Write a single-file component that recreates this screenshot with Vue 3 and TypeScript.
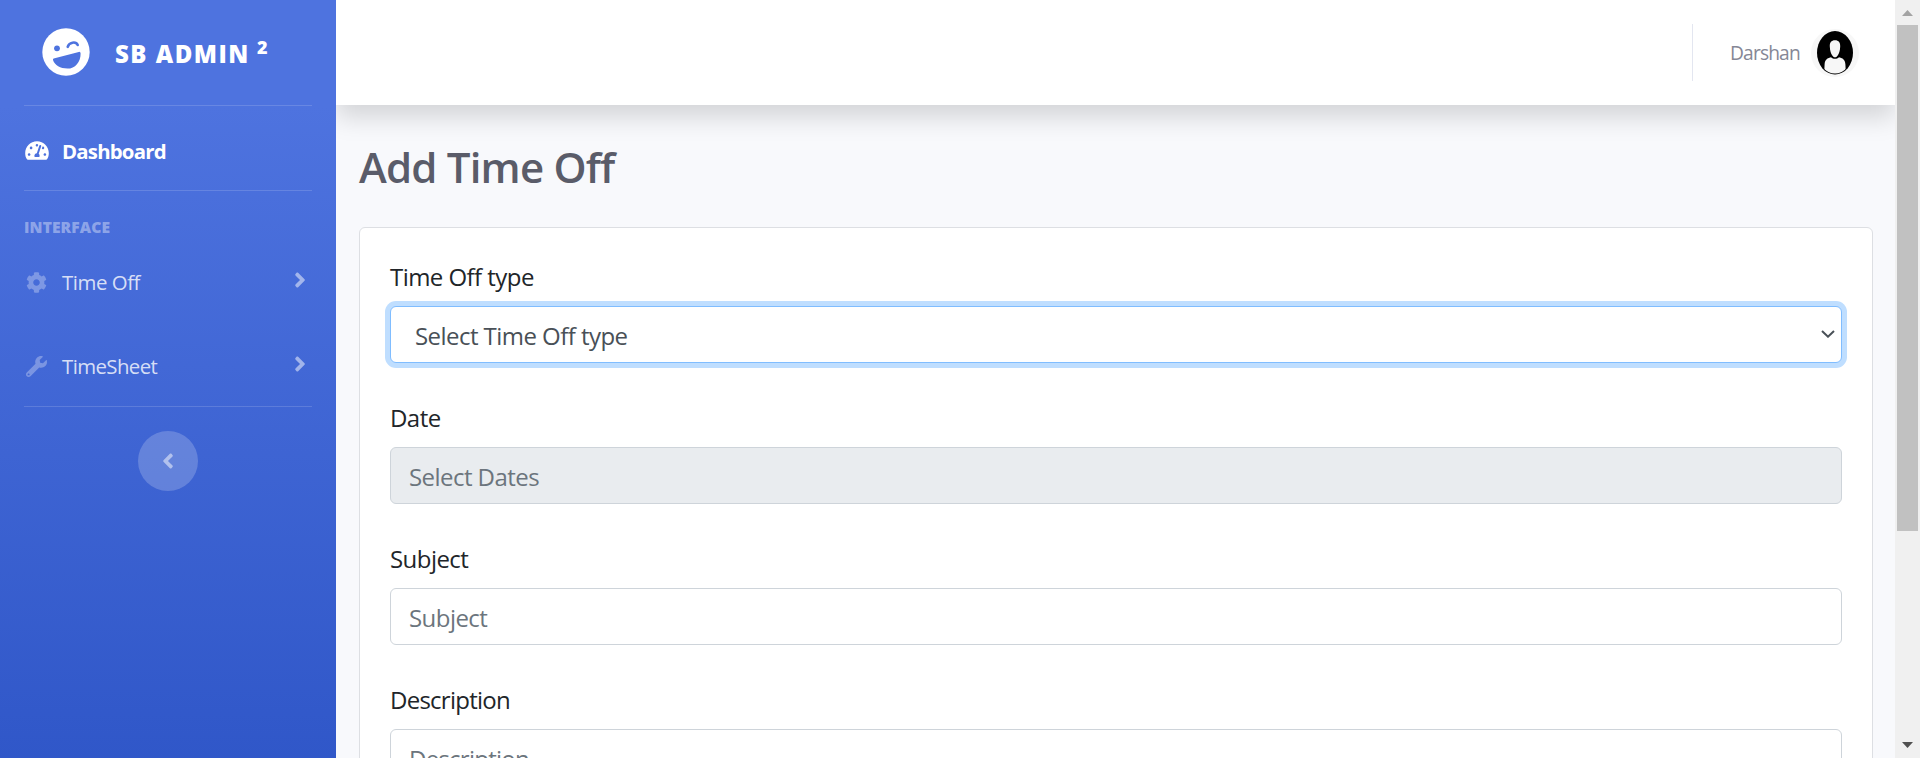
<script setup lang="ts">
import { ref } from 'vue'

interface NavEntry {
  label: string
  kind: string
  icon: string
}

const tachometer =
  'M288 32C128.94 32 0 160.94 0 320c0 52.8 14.25 102.26 39.06 144.8 5.61 9.62 16.3 15.2 27.44 15.2h443c11.14 0 21.83-5.58 27.44-15.2C561.75 422.26 576 372.8 576 320c0-159.06-128.94-288-288-288zm0 64c14.71 0 26.58 10.13 30.32 23.65-1.11 2.26-2.64 4.23-3.45 6.67l-9.22 27.67c-5.13 3.49-10.97 6.01-17.64 6.01-17.67 0-32-14.33-32-32S270.33 96 288 96zM96 384c-17.67 0-32-14.33-32-32s14.33-32 32-32 32 14.33 32 32-14.33 32-32 32zm48-160c-17.67 0-32-14.33-32-32s14.33-32 32-32 32 14.33 32 32-14.33 32-32 32zm246.77-72.41l-61.33 184C343.13 347.33 352 364.54 352 384c0 11.72-3.38 22.55-8.88 32H232.88c-5.5-9.45-8.88-20.28-8.88-32 0-33.94 26.5-61.43 59.9-63.59l61.34-184.01c4.17-12.56 17.73-19.45 30.36-15.17 12.57 4.19 19.35 17.79 15.17 30.36zm14.66 57.2l15.52-46.55c3.47-1.29 7.13-2.23 11.05-2.23 17.67 0 32 14.33 32 32s-14.33 32-32 32c-11.38-.01-20.89-6.28-26.57-15.22zM480 384c-17.67 0-32-14.33-32-32s14.33-32 32-32 32 14.33 32 32-14.33 32-32 32z'
const angle =
  'M224.3 273l-136 136c-9.4 9.4-24.6 9.4-33.9 0l-22.6-22.6c-9.4-9.4-9.4-24.6 0-33.9l96.4-96.4-96.4-96.4c-9.4-9.4-9.4-24.6 0-33.9L54.3 103c9.4-9.4 24.6-9.4 33.9 0l136 136c9.5 9.4 9.5 24.6.1 34z'

const entries: NavEntry[] = [
  {
    label: 'Time Off',
    kind: 'time-off',
    icon: 'M487.4 315.7l-42.6-24.6c4.3-23.2 4.3-47 0-70.2l42.6-24.6c4.9-2.8 7.1-8.6 5.5-14-11.1-35.6-30-67.8-54.7-94.6-3.8-4.1-10-5.1-14.8-2.3L380.8 110c-17.9-15.4-38.5-27.3-60.8-35.1V25.8c0-5.6-3.9-10.5-9.4-11.7-36.7-8.2-74.3-7.8-109.2 0-5.5 1.2-9.4 6.1-9.4 11.7V75c-22.2 7.9-42.8 19.8-60.8 35.1L88.7 85.5c-4.9-2.8-11-1.9-14.8 2.3-24.7 26.7-43.6 58.9-54.7 94.6-1.7 5.4.6 11.2 5.5 14L67.3 221c-4.3 23.2-4.3 47 0 70.2l-42.6 24.6c-4.9 2.8-7.1 8.6-5.5 14 11.1 35.6 30 67.8 54.7 94.6 3.8 4.1 10 5.1 14.8 2.3l42.6-24.6c17.9 15.4 38.5 27.3 60.8 35.1v49.2c0 5.6 3.9 10.5 9.4 11.7 36.7 8.2 74.3 7.8 109.2 0 5.5-1.2 9.4-6.1 9.4-11.7v-49.2c22.2-7.9 42.8-19.8 60.8-35.1l42.6 24.6c4.9 2.8 11 1.9 14.8-2.3 24.7-26.7 43.6-58.9 54.7-94.6 1.5-5.5-.7-11.3-5.6-14.1zM256 336c-44.1 0-80-35.9-80-80s35.9-80 80-80 80 35.9 80 80-35.9 80-80 80z',
  },
  {
    label: 'TimeSheet',
    kind: 'timesheet',
    icon: 'M507.73 109.1c-2.24-9.03-13.54-12.09-20.12-5.51l-74.36 74.36-67.88-11.31-11.31-67.88 74.36-74.36c6.62-6.62 3.43-17.9-5.66-20.16-47.38-11.74-99.55.91-136.58 37.93-39.64 39.64-50.55 97.1-34.05 147.2L18.74 402.76c-24.99 24.99-24.99 65.51 0 90.5 24.99 24.99 65.51 24.99 90.5 0l213.21-213.21c50.12 16.71 107.47 5.68 147.37-34.22 37.07-37.07 49.7-89.32 37.91-136.73zM64 472c-13.25 0-24-10.75-24-24 0-13.26 10.75-24 24-24s24 10.74 24 24c0 13.25-10.75 24-24 24z',
  },
]

const subject = ref('')
const description = ref('')
</script>

<template>
  <div class="page">
    <aside class="sidebar">
      <a class="brand">
        <svg class="brand-icon" viewBox="0 0 48 48">
          <circle cx="24" cy="24" r="23.7" fill="#fff" />
          <circle cx="15" cy="20.3" r="2.9" fill="#4e73df" />
          <path d="M25.7 18.8c1.2-4.6 8.2-5.8 10-1.8" fill="none" stroke="#4e73df" stroke-width="2.6" stroke-linecap="round" />
          <path d="M11.7 30.6 36.8 23.9q1.8-.3 1.8 1.5C38.8 34 33 40.6 25.5 40.6 18.2 40.6 12.8 37.5 11 32.1Q10.8 30.9 11.7 30.6z" fill="#4e73df" />
        </svg>
        <span class="brand-name">SB ADMIN</span><span class="brand-sup">2</span>
      </a>
      <hr class="rule" />
      <a class="nav-link dashboard">
        <span class="nav-icon"><svg class="tach" viewBox="0 0 576 512"><path :d="tachometer" /></svg></span>
        <span class="nav-label">Dashboard</span>
      </a>
      <hr class="rule" />
      <div class="heading"><span>INTERFACE</span></div>
      <a v-for="e in entries" :key="e.kind" class="nav-link entry" :class="e.kind">
        <span class="nav-icon"><svg class="glyph" viewBox="0 0 512 512"><path :d="e.icon" /></svg></span>
        <span class="nav-label">{{ e.label }}</span>
        <svg class="angle" viewBox="0 0 256 512"><path :d="angle" /></svg>
      </a>
      <hr class="rule last" />
      <button class="toggle" aria-label="Toggle sidebar">
        <svg class="angle flip" viewBox="0 0 256 512"><path :d="angle" /></svg>
      </button>
    </aside>

    <div class="content">
      <header class="topbar">
        <span class="divider"></span>
        <span class="user">Darshan</span>
        <svg class="avatar" viewBox="0 0 48 48">
          <defs>
            <clipPath id="avatar-clip"><ellipse cx="24" cy="23.8" rx="17.3" ry="20.8" /></clipPath>
          </defs>
          <circle cx="24" cy="24" r="24" fill="#f7f7f7" />
          <ellipse cx="24" cy="23.8" rx="18" ry="21.7" fill="#000" />
          <g clip-path="url(#avatar-clip)" fill="#f7f7f7">
            <path d="M24 11.3c3.7 0 5.3 2.2 5.2 6.1-.1 4.6-1.3 7.2-2.5 9-.9 1.3-1.700 1.900-2.700 1.900s-1.800-.6-2.700-1.900c-1.200-1.800-2.400-4.400-2.500-9-.1-3.900 1.500-6.100 5.200-6.100z" />
            <path d="M20 28.200c1.200 1 2.600 1.500 4 1.500s2.800-.5 4-1.500c4.500 1 6 3 6.400 7l.6 12H13l.6-12c.4-4 1.900-6 6.400-7z" />
          </g>
        </svg>
      </header>

      <main class="main">
        <h1 class="title">Add Time Off</h1>
        <form class="card">
          <div class="group type">
            <label>Time Off type</label>
            <div class="control focused">
              <span class="value">Select Time Off type</span>
              <svg class="chevron" viewBox="0 0 14 8"><path d="M1 1l6 5.700L13 1" /></svg>
            </div>
          </div>
          <div class="group date">
            <label>Date</label>
            <input class="control" placeholder="Select Dates" disabled />
          </div>
          <div class="group subject">
            <label>Subject</label>
            <input v-model="subject" class="control" placeholder="Subject" />
          </div>
          <div class="group description">
            <label>Description</label>
            <input v-model="description" class="control" placeholder="Description" />
          </div>
        </form>
      </main>
    </div>

    <div class="scrollbar">
      <svg class="arrow" viewBox="0 0 11 6"><path d="M0 6 5.500 0 11 6z" fill="#a3a3a3" /></svg>
      <div class="thumb"></div>
      <svg class="arrow down" viewBox="0 0 11 6"><path d="M0 0h11L5.500 6z" fill="#505050" /></svg>
    </div>
  </div>
</template>

<style>
html,
body {
  margin: 0;
  overflow: hidden;
}
</style>

<style scoped>
* {
  box-sizing: border-box;
}
.page {
  display: flex;
  width: 1920px;
  height: 758px;
  overflow: hidden;
  background: #f8f9fc;
  font-family: 'Open Sans', 'Noto Sans', sans-serif;
}
.sidebar {
  flex: none;
  display: flex;
  flex-direction: column;
  width: 336px;
  height: 1060px;
  background: linear-gradient(180deg, #4e73df 10%, #224abe 100%);
}
.brand {
  display: flex;
  align-items: flex-start;
  height: 105px;
  padding: 28px 0 0 42px;
  color: #fff;
  font-weight: 800;
}
.brand-icon {
  width: 48px;
  height: 48px;
  margin-right: 25px;
}
.brand-name {
  width: 142px;
  margin-top: 9px;
  font-size: 24px;
  line-height: 34px;
  letter-spacing: 1.5px;
  white-space: nowrap;
}
.brand-sup {
  margin-top: 7px;
  font-size: 18px;
  line-height: 24px;
}
.rule {
  flex: none;
  width: 288px;
  height: 1px;
  margin: 0 24px;
  border: 0;
  background: rgba(255, 255, 255, 0.15);
}
.nav-link {
  display: flex;
  align-items: center;
  height: 84px;
  padding: 0 30px 0 24px;
  font-size: 20.4px;
}
.dashboard {
  padding-top: 5px;
  color: #fff;
  font-weight: 700;
  letter-spacing: -0.8px;
}
.nav-icon {
  display: flex;
  justify-content: center;
  width: 25px;
  margin-right: 13px;
}
.nav-icon svg,
.angle {
  fill: currentColor;
}
.tach {
  width: 24px;
  height: 21px;
}
.nav-label {
  flex: 1;
  line-height: 28px;
  white-space: nowrap;
}
.heading {
  height: 49px;
  padding: 25px 0 0 24px;
  color: rgba(255, 255, 255, 0.4);
  font-size: 15.6px;
  font-weight: 800;
  line-height: 22px;
  letter-spacing: 0.1px;
}
.entry {
  color: rgba(255, 255, 255, 0.8);
}
.time-off {
  letter-spacing: -0.45px;
}
.timesheet {
  letter-spacing: -0.6px;
}
.last {
  margin-top: -2px;
}
.glyph {
  width: 21px;
  height: 21px;
  color: rgba(255, 255, 255, 0.3);
}
.angle {
  width: 12px;
  height: 24px;
  color: rgba(255, 255, 255, 0.5);
}
.entry .angle {
  margin-bottom: 4px;
}
.toggle {
  display: flex;
  align-items: center;
  justify-content: center;
  width: 60px;
  height: 60px;
  margin: 24px auto 0;
  padding: 0 1px 0 0;
  border: 0;
  border-radius: 50%;
  background: rgba(255, 255, 255, 0.2);
}
.flip {
  transform: scaleX(-1);
}
.content {
  flex: none;
  width: 1559px;
  overflow: hidden;
}
.topbar {
  display: flex;
  align-items: center;
  justify-content: flex-end;
  height: 105px;
  padding-right: 36px;
  background: #fff;
  box-shadow: 0 12px 24px rgba(0, 0, 0, 0.15);
}
.divider {
  width: 1px;
  height: 57px;
  margin-right: 37px;
  background: #e3e6f0;
}
.user {
  width: 81px;
  color: #858796;
  font-size: 19.2px;
  line-height: 28px;
  letter-spacing: -0.85px;
}
.avatar {
  width: 48px;
  height: 48px;
}
.main {
  padding: 35px 22px 0 23px;
}
.title {
  height: 87px;
  margin: 0;
  color: #5a5c69;
  font-size: 42px;
  font-weight: 600;
  line-height: 54px;
  letter-spacing: -0.8px;
  white-space: nowrap;
}
.card {
  display: flex;
  flex-direction: column;
  height: 800px;
  padding: 31px 30px 0;
  border: 1px solid #dddfe3;
  border-radius: 6px;
  background: #fff;
}
.group {
  flex: none;
  height: 141px;
  letter-spacing: -0.55px;
}
.description {
  letter-spacing: -0.75px;
}
.group label {
  display: block;
  height: 47px;
  color: #212529;
  font-size: 24px;
  line-height: 36px;
}
.control {
  display: flex;
  align-items: center;
  width: 100%;
  height: 57px;
  padding: 2px 18px 0;
  border: 1px solid #ced4da;
  border-radius: 6px;
  outline: 0;
  background: #fff;
  color: #495057;
  font-family: inherit;
  font-size: 24px;
  letter-spacing: inherit;
}
.control::placeholder {
  color: #6c757d;
  opacity: 1;
}
.control:disabled {
  background: #e9ecef;
}
.focused {
  justify-content: space-between;
  padding: 2px 6px 0 24px;
  border-color: #80bdff;
  box-shadow: 0 0 0 5px #bfdeff;
}
.chevron {
  width: 14px;
  height: 8px;
  margin-bottom: 3px;
  fill: none;
  stroke: #495057;
  stroke-width: 2;
}
.scrollbar {
  flex: none;
  display: flex;
  flex-direction: column;
  align-items: center;
  width: 25px;
  height: 758px;
  padding: 10px 0;
  background: #f0f0f0;
}
.arrow {
  flex: none;
  width: 11px;
  height: 6px;
}
.thumb {
  width: 21px;
  height: 506px;
  margin-top: 9px;
  background: #c1c1c1;
}
.down {
  margin-top: auto;
}
</style>
